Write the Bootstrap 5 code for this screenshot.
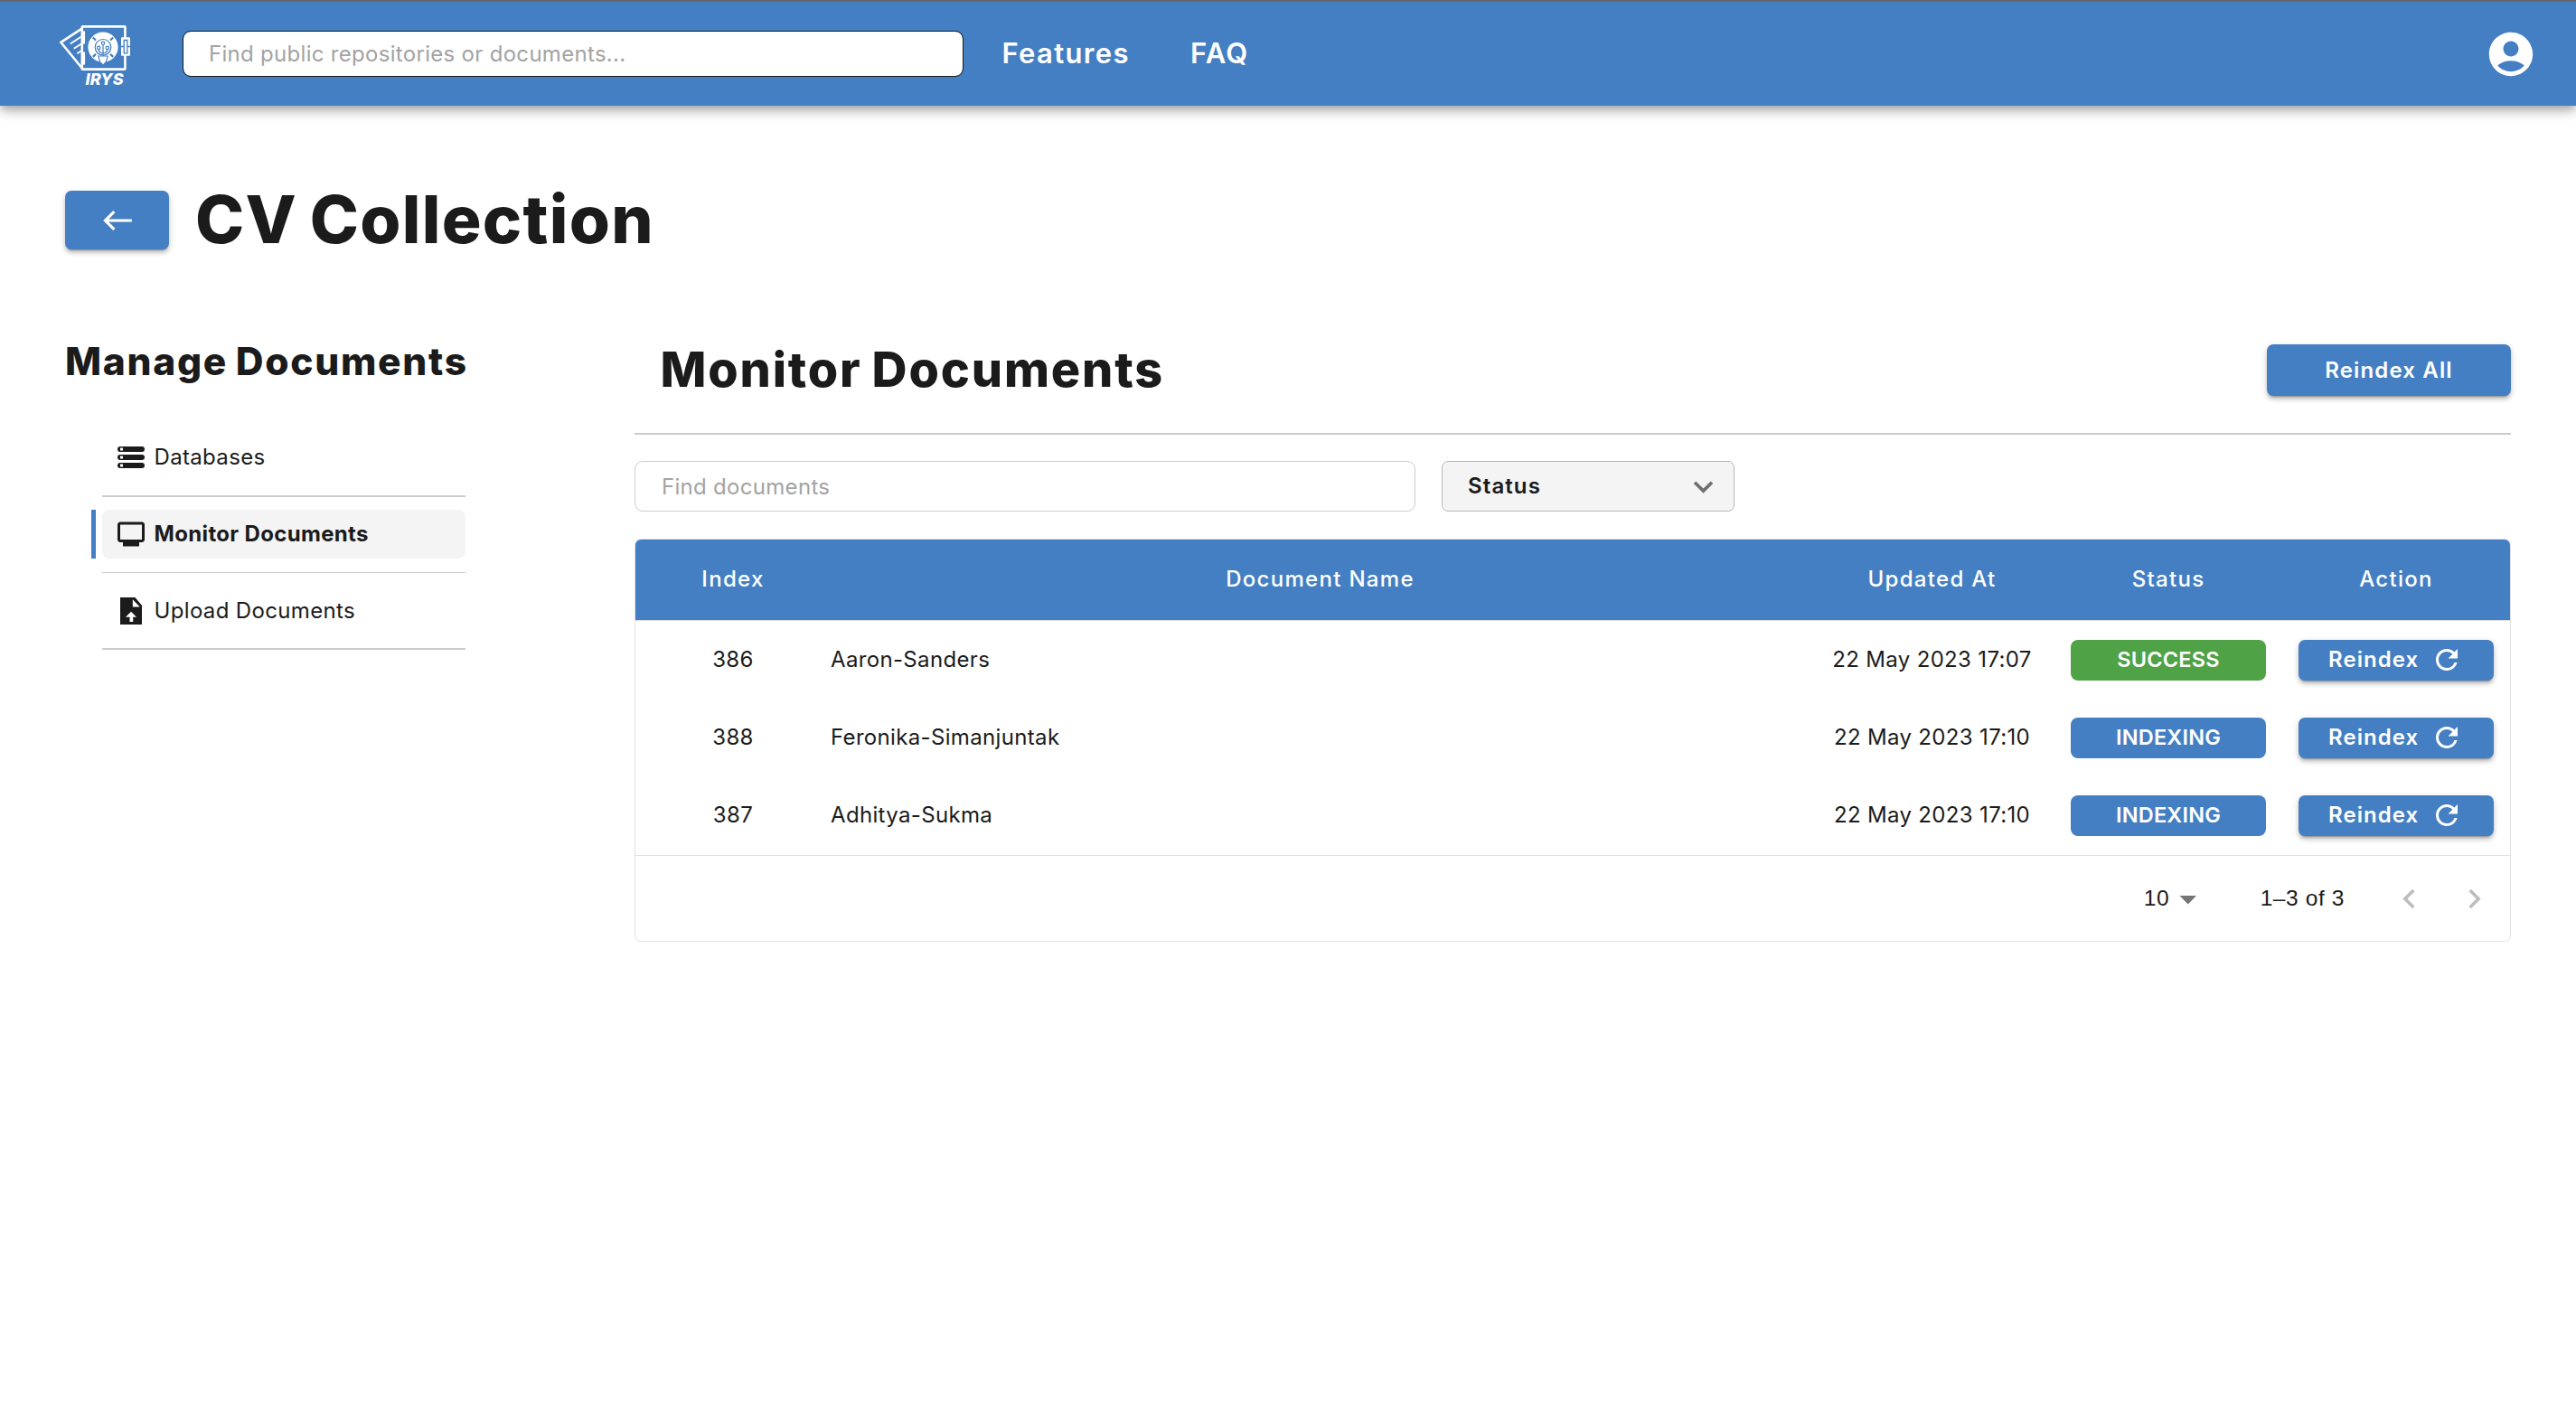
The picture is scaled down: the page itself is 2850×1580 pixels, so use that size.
<!DOCTYPE html>
<html lang="en">
<head>
<meta charset="utf-8">
<meta name="viewport" content="width=device-width, initial-scale=1">
<title>CV Collection</title>
<link href="https://cdn.jsdelivr.net/npm/bootstrap@5.3.0/dist/css/bootstrap.min.css" rel="stylesheet">
<style>
:root { --irys-blue: #447fc3; --ink: #1b1b1b; }
body { font-family: Inter, "Liberation Sans", sans-serif; font-size: 24px; letter-spacing: .34px; color: var(--ink); background: #fff; }
svg { display: block; flex: none; }
.topbar { height: 117px; padding: 0 43px 0 60px; background: var(--irys-blue); border-top: 2px solid #666; box-shadow: 0 4px 8px -2px rgba(0,0,0,.2), 0 8px 10px rgba(0,0,0,.14), 0 2px 20px rgba(0,0,0,.12); }
.form-control { font-size: 24px; letter-spacing: .3px; padding: 0 28px; border-radius: 9px; }
.form-control::placeholder { color: #a3a3a3; opacity: 1; }
.search-top { width: 864px; height: 51px; margin-left: 52px; border: 1px solid #1b1b1b; }
.top-nav { margin-left: 42.5px; gap: 67px; }
.top-link { font-size: 31px; font-weight: 600; letter-spacing: 1.35px; line-height: 40px; color: #fff; text-decoration: none; margin-top: -2px; }
.page { padding: 94px 72px 0; }
.title-row { gap: 29px; }
.btn-irys { background: var(--irys-blue); color: #fff; border: 0; border-radius: 7px; font-size: 24px; font-weight: 600; letter-spacing: 1.15px; padding: 0; line-height: 1; box-shadow: 0 3px 2px -2px rgba(0,0,0,.3), 0 4px 4px rgba(0,0,0,.16), 0 2px 9px rgba(0,0,0,.12); }
.btn-back { width: 115px; height: 65px; }
.h-title, .h-side, .h-panel { font-weight: 800; word-spacing: -.05em; white-space: nowrap; }
.h-title { font-size: 73px; line-height: 65px; letter-spacing: 1.3px; margin: -1px 0 0; }
.columns { margin-top: 94px; gap: 187px; }
.side { width: 443px; flex: none; }
.h-side { font-size: 42.5px; line-height: 60px; letter-spacing: 1.7px; margin: 0 0 35px; }
.side-list { margin-left: 41px; }
.side-item { padding: 14px 0 15px; border-bottom: 2px solid #ccc; }
.side-item.current { border-bottom-width: 1px; }
.side-item:last-child { padding: 15px 0 14px; }
.side-link { position: relative; height: 54px; padding-left: 14px; gap: 7.5px; border-radius: 8px; color: var(--ink); text-decoration: none; }
.current .side-link { background: #f4f4f4; font-weight: 700; }
.current .side-link::before { content: ""; position: absolute; left: -12px; top: 0; width: 5px; height: 54px; background: var(--irys-blue); }
.panel-head { padding: 11px 0 41px 28.5px; border-bottom: 2px solid #ccc; }
.h-panel { font-size: 54px; line-height: 56px; letter-spacing: 1.85px; margin: 0; }
.btn-all { width: 270px; height: 57px; }
.filters { margin-top: 29px; gap: 29px; }
.find { width: 864px; height: 56px; border: 1px solid #ccc; padding-left: 29px; }
.status-pick { width: 324px; height: 56px; border: 1px solid #b8b8b8; border-radius: 7px; background: #f4f4f4; padding: 0 12px 0 28px; font-weight: 600; letter-spacing: 1.1px; }
.grid-card { margin-top: 30px; border: 1px solid #e0e0e0; border-radius: 7px; overflow: hidden; }
.doc-table { table-layout: fixed; margin: 0; color: var(--ink); }
.doc-table > thead > tr > th { background: var(--irys-blue); color: #fff; height: 90px; padding: 0 0 2px; text-align: center; vertical-align: middle; font-weight: 500; font-size: 24px; letter-spacing: 1.3px; border: 0; box-shadow: inset 0 -1px #e0e0e0; }
.doc-table > tbody > tr > td { height: 86px; padding: 0; vertical-align: middle; text-align: center; border: 0; background: #fff; }
.doc-table > tbody > tr:last-child > td { height: 87px; padding-bottom: 1px; }
.doc-table > tbody > tr > td.doc-name { text-align: left; }
.pill, .btn-row { width: 216px; height: 45px; margin: 0 auto; font-size: 24px; font-weight: 600; }
.pill { display: flex; align-items: center; justify-content: center; border-radius: 8px; color: #fff; background: var(--irys-blue); font-size: 23.5px; letter-spacing: .2px; line-height: 1; }
.pill.done { background: #50a247; }
.btn-row { display: flex; align-items: center; padding-left: 33px; gap: 13px; letter-spacing: 1.05px; }
.doc-foot { height: 95px; border-top: 1px solid #e0e0e0; padding-right: 18px; font-family: "Liberation Sans", sans-serif; font-size: 24.5px; letter-spacing: .6px; }
.range { margin: 0 50px 0 66.5px; }
.pager { gap: 29px; }
</style>
<script src="https://cdn.jsdelivr.net/npm/bootstrap@5.3.0/dist/js/bootstrap.bundle.min.js"></script>
</head>
<body>
<svg width="0" height="0" class="position-absolute"><defs>
<symbol id="i-refresh" viewBox="0 0 24 24"><path d="M17.65 6.35A7.958 7.958 0 0 0 12 4c-4.42 0-7.99 3.58-7.99 8s3.57 8 7.99 8c3.73 0 6.84-2.55 7.73-6h-2.08A5.99 5.99 0 0 1 12 18c-3.31 0-6-2.69-6-6s2.69-6 6-6c1.66 0 3.14.69 4.22 1.78L13 11h7V4l-2.35 2.35z"/></symbol>
</defs></svg>

<header class="topbar d-flex align-items-center">
  <a href="#" aria-label="IRYS">
    <svg width="90" height="74" viewBox="60 23.5 90 74" fill="none" stroke="#fff" stroke-width="2.6">
      <path d="M91 31.8 67.3 47.3 91 76.2" stroke-linejoin="round"/>
      <path d="M77.7 49 90 41M81.7 54.3 90 49M85.3 59.8 90 56.8" stroke-width="1.9"/>
      <rect x="90.8" y="29.9" width="47.6" height="47.2" rx=".6"/>
      <path d="M92.2 35v14M92.2 58v14" stroke-width="3.8"/>
      <circle cx="114" cy="52.7" r="16.6" fill="#fff" stroke="none"/>
      <path d="m102.8 42 3.2 3M125.2 42l-3.2 3M102.8 63.4l3.2-3M125.2 63.4l-3.2-3" stroke="#447fc3" stroke-width="2.2"/>
      <path d="m108.8 62.5 1.8 6.5 3.4 3.4 3.4-3.4 1.8-6.5z" fill="#fff" stroke="#447fc3" stroke-width="1.1"/>
      <circle cx="114" cy="52.8" r="8.8" fill="#fff" stroke="#447fc3" stroke-width="1.2"/>
      <g stroke="#447fc3" stroke-width="1.2"><circle cx="114" cy="48.3" r="1.7"/><circle cx="109.2" cy="53.4" r="1.7"/><circle cx="118.8" cy="53.4" r="1.7"/><path d="M114 50v12M109.2 55.2c0 3 2.2 4 4.8 4.2 2.6-.2 4.8-1.2 4.8-4.2"/></g>
      <rect x="134" y="41.8" width="10" height="20.4" rx="1" fill="#fff" stroke="none"/>
      <path d="M137.2 45v14.3h3.6V45zM134 52h3.2M140.8 52h3.4" stroke="#447fc3" stroke-width="1.3"/>
      <text x="94.6" y="94" fill="#fff" stroke="none" font-family="Inter, sans-serif" font-size="18" font-weight="800" font-style="italic" letter-spacing="0" textLength="42" lengthAdjust="spacingAndGlyphs">IRYS</text>
    </svg>
  </a>
  <input class="form-control search-top" placeholder="Find public repositories or documents...">
  <nav class="top-nav d-flex">
    <a class="top-link" href="#">Features</a>
    <a class="top-link" href="#">FAQ</a>
  </nav>
  <svg class="ms-auto" width="58" height="58" viewBox="0 0 24 24" fill="#fff"><path d="M12 2C6.48 2 2 6.48 2 12s4.48 10 10 10 10-4.48 10-10S17.52 2 12 2zm0 4c1.93 0 3.5 1.57 3.5 3.5S13.93 13 12 13s-3.5-1.57-3.5-3.5S10.07 6 12 6zm0 14c-2.03 0-4.43-.82-6.14-2.88C7.55 15.8 9.68 15 12 15s4.45.8 6.14 2.12C16.43 19.18 14.03 20 12 20z"/></svg>
</header>

<main class="page">
  <div class="title-row d-flex align-items-start">
    <button class="btn btn-irys btn-back d-flex align-items-center justify-content-center" aria-label="Back">
      <svg width="38" height="38" viewBox="0 0 24 24" fill="#fff"><path d="m9 19 1.41-1.41L5.83 13H22v-2H5.83l4.59-4.59L9 5l-7 7 7 7z"/></svg>
    </button>
    <h1 class="h-title">CV Collection</h1>
  </div>

  <div class="columns d-flex">
    <aside class="side">
      <h2 class="h-side">Manage Documents</h2>
      <ul class="side-list list-unstyled mb-0">
        <li class="side-item"><a href="#" class="side-link d-flex align-items-center">
          <svg width="36" height="36" viewBox="0 0 24 24"><path fill="#1b1b1b" fill-rule="evenodd" d="M4 16h16a2 2 0 0 1 0 4H4a2 2 0 0 1 0-4zm0 1v2h2v-2zM4 4h16a2 2 0 0 1 0 4H4a2 2 0 0 1 0-4zm0 1v2h2V5zm0 5h16a2 2 0 0 1 0 4H4a2 2 0 0 1 0-4zm0 1v2h2v-2z"/></svg>Databases</a></li>
        <li class="side-item current"><a href="#" class="side-link d-flex align-items-center">
          <svg width="36" height="36" viewBox="0 0 24 24" fill="#1b1b1b"><path d="M20 3H4c-1.1 0-2 .9-2 2v11c0 1.1.9 2 2 2h2v3h12v-3h2c1.1 0 2-.9 2-2V5c0-1.1-.9-2-2-2zm0 13H4V5h16v11z"/></svg>Monitor Documents</a></li>
        <li class="side-item"><a href="#" class="side-link d-flex align-items-center">
          <svg width="36" height="36" viewBox="0 0 24 24" fill="#1b1b1b"><path fill-rule="evenodd" d="M4 2h11l5 6v14H4zM13.200 3.500V9h5.300zM8 16.500h3V20h2.500v-3.500h2.500l-4-4z"/></svg>Upload Documents</a></li>
      </ul>
    </aside>

    <section class="flex-grow-1">
      <div class="panel-head d-flex justify-content-between">
        <h2 class="h-panel">Monitor Documents</h2>
        <button class="btn btn-irys btn-all">Reindex All</button>
      </div>
      <div class="filters d-flex">
        <input class="form-control find" placeholder="Find documents">
        <div class="status-pick d-flex align-items-center justify-content-between">Status
          <svg width="43" height="43" viewBox="0 0 24 24" fill="#707070"><path d="M16.59 8.59 12 13.17 7.41 8.59 6 10l6 6 6-6z"/></svg>
        </div>
      </div>

      <div class="grid-card">
        <table class="table doc-table">
          <colgroup><col style="width:216px"><col><col style="width:271px"><col style="width:252px"><col style="width:252px"></colgroup>
          <thead><tr><th>Index</th><th>Document Name</th><th>Updated At</th><th>Status</th><th>Action</th></tr></thead>
          <tbody>
            <tr><td>386</td><td class="doc-name">Aaron-Sanders</td><td>22 May 2023 17:07</td><td><span class="pill done">SUCCESS</span></td>
              <td><button class="btn btn-irys btn-row">Reindex <svg width="36" height="36" fill="#fff"><use href="#i-refresh"/></svg></button></td></tr>
            <tr><td>388</td><td class="doc-name">Feronika-Simanjuntak</td><td>22 May 2023 17:10</td><td><span class="pill">INDEXING</span></td>
              <td><button class="btn btn-irys btn-row">Reindex <svg width="36" height="36" fill="#fff"><use href="#i-refresh"/></svg></button></td></tr>
            <tr><td>387</td><td class="doc-name">Adhitya-Sukma</td><td>22 May 2023 17:10</td><td><span class="pill">INDEXING</span></td>
              <td><button class="btn btn-irys btn-row">Reindex <svg width="36" height="36" fill="#fff"><use href="#i-refresh"/></svg></button></td></tr>
          </tbody>
        </table>
        <div class="doc-foot d-flex align-items-center justify-content-end">
          <span>10</span>
          <svg class="ms-2" width="26" height="43" viewBox="0 0 26 43"><path fill="#757575" d="M3.5 18H22l-9.250 9.500z"/></svg>
          <span class="range">1–3 of 3</span>
          <div class="pager d-flex">
            <svg width="43" height="43" viewBox="0 0 24 24" fill="#bdbdbd"><path d="M15.41 7.41 14 6l-6 6 6 6 1.41-1.41L10.83 12z"/></svg>
            <svg width="43" height="43" viewBox="0 0 24 24" fill="#bdbdbd"><path d="M10 6 8.59 7.41 13.17 12l-4.58 4.59L10 18l6-6z"/></svg>
          </div>
        </div>
      </div>
    </section>
  </div>
</main>
</body>
</html>
